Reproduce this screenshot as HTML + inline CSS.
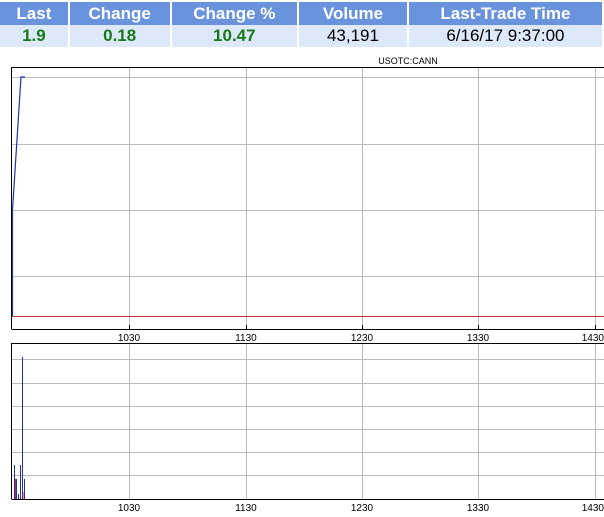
<!DOCTYPE html>
<html><head><style>
body{margin:0;background:#fff;width:604px;height:517px;overflow:hidden;font-family:"Liberation Sans",Arial,sans-serif}
table{position:absolute;left:0;top:2px;border-collapse:separate;border-spacing:2px 0;margin-left:-2px}
th{background:#6a93dd;color:#fff;font-size:17px;font-weight:bold;height:23px;padding:0}
td{background:#dde9fb;font-size:17px;height:22px;padding:0;text-align:center}
.g{color:#177a17;font-weight:bold}
</style></head><body>
<table>
<tr><th style="width:68px">Last</th><th style="width:100px">Change</th><th style="width:126px">Change %</th><th style="width:108px">Volume</th><th style="width:194px">Last-Trade Time</th></tr>
<tr><td class="g">1.9</td><td class="g">0.18</td><td class="g">10.47</td><td>43,191</td><td>6/16/17 9:37:00</td></tr>
</table>
<svg width="604" height="517" style="position:absolute;left:0;top:0" font-family="Liberation Sans, Arial, sans-serif" font-size="10">
<text x="408" y="64" text-anchor="middle" font-size="9">USOTC:CANN</text>
<g stroke="#bbb" stroke-width="1">
<line x1="12" y1="77.5" x2="604" y2="77.5"/><line x1="12" y1="144.5" x2="604" y2="144.5"/><line x1="12" y1="210.5" x2="604" y2="210.5"/><line x1="12" y1="276.5" x2="604" y2="276.5"/>
<line x1="129.5" y1="67" x2="129.5" y2="329"/><line x1="246.5" y1="67" x2="246.5" y2="329"/><line x1="362.5" y1="67" x2="362.5" y2="329"/><line x1="478.5" y1="67" x2="478.5" y2="329"/><line x1="595.5" y1="67" x2="595.5" y2="329"/>
<line x1="12" y1="359.5" x2="604" y2="359.5"/><line x1="12" y1="383.5" x2="604" y2="383.5"/><line x1="12" y1="406.5" x2="604" y2="406.5"/><line x1="12" y1="429.5" x2="604" y2="429.5"/><line x1="12" y1="452.5" x2="604" y2="452.5"/><line x1="12" y1="475.5" x2="604" y2="475.5"/>
<line x1="129.5" y1="343" x2="129.5" y2="499"/><line x1="246.5" y1="343" x2="246.5" y2="499"/><line x1="362.5" y1="343" x2="362.5" y2="499"/><line x1="478.5" y1="343" x2="478.5" y2="499"/><line x1="595.5" y1="343" x2="595.5" y2="499"/>
</g>
<line x1="12" y1="316.5" x2="604" y2="316.5" stroke="#c03030"/>
<polyline points="12.5,316 12.5,210 21,77 25,77" fill="none" stroke="#2030b0" stroke-width="1.2"/>
<g stroke="#000" fill="none">
<path d="M11.5 329V67.5H604"/><path d="M11.5 329.5H604"/>
<path d="M11.5 499V343.5H604"/><path d="M11.5 499.5H604"/>
</g>
<g stroke="#000">
<line x1="129.5" y1="325" x2="129.5" y2="329"/><line x1="246.5" y1="325" x2="246.5" y2="329"/><line x1="362.5" y1="325" x2="362.5" y2="329"/><line x1="478.5" y1="325" x2="478.5" y2="329"/><line x1="595.5" y1="325" x2="595.5" y2="329"/>
</g>
<g stroke="#2030b0" stroke-width="1">
<line x1="14.5" y1="465" x2="14.5" y2="499"/><line x1="16.5" y1="479" x2="16.5" y2="499"/><line x1="20.5" y1="465" x2="20.5" y2="499"/><line x1="22.5" y1="357" x2="22.5" y2="499"/><line x1="24.5" y1="479" x2="24.5" y2="499"/><line x1="18.5" y1="494" x2="18.5" y2="499"/>
</g>
<g stroke="#c03030"><line x1="15.5" y1="479" x2="15.5" y2="499"/><line x1="23" y1="492" x2="23" y2="499"/></g>
<g text-anchor="middle">
<text x="129" y="341">1030</text><text x="246" y="341">1130</text><text x="362" y="341">1230</text><text x="478" y="341">1330</text><text x="604" y="341" text-anchor="end">1430</text>
<text x="129" y="511">1030</text><text x="246" y="511">1130</text><text x="362" y="511">1230</text><text x="478" y="511">1330</text><text x="604" y="511" text-anchor="end">1430</text>
</g>
</svg>
</body></html>
